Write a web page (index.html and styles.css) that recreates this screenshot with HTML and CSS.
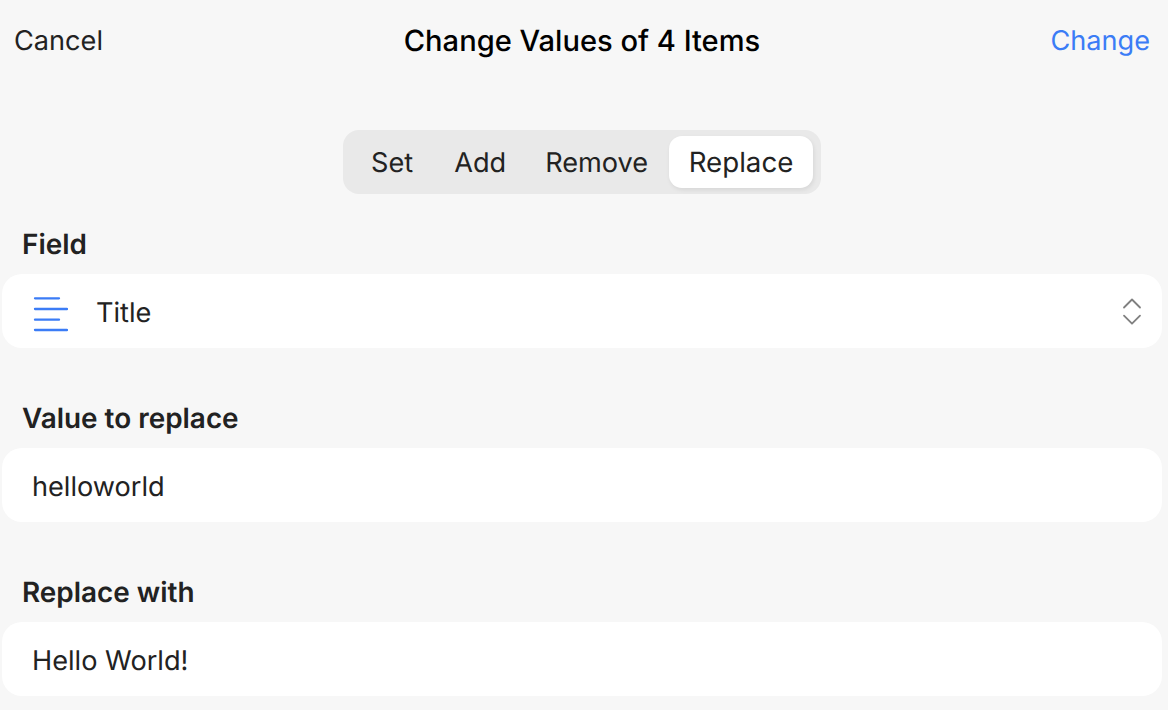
FILE: index.html
```html
<!DOCTYPE html>
<html lang="en">
<head>
<meta charset="utf-8">
<title>Change Values</title>
<link rel="stylesheet" href="styles.css">
</head>
<body>
<header class="topbar">
  <span class="cancel">Cancel</span>
  <span class="title">Change Values of 4 Items</span>
  <span class="confirm">Change</span>
</header>
<div class="segment-wrap">
  <div class="segment">
    <span class="seg seg-set">Set</span>
    <span class="seg seg-add">Add</span>
    <span class="seg seg-remove">Remove</span>
    <span class="seg seg-on">Replace</span>
  </div>
</div>
<section class="group group-field">
  <div class="label">Field</div>
  <div class="box box-select">
    <svg class="icon" width="36" height="44" viewBox="0 1 36 44" fill="none" stroke="#3b7cf6" stroke-width="2.300" stroke-linecap="round">
      <path d="M3 9.300H27M3 20H35M3 30.700H27M3 41H35"/>
    </svg>
    <span class="value">Title</span>
    <svg class="chevrons" width="20" height="30" viewBox="0 1 20 30" fill="none" stroke="#808080" stroke-width="1.800" stroke-linecap="round" stroke-linejoin="round">
      <path d="M2 11.500L10 3.500L18 11.500M2 19.700L10 27.700L18 19.700"/>
    </svg>
  </div>
</section>
<section class="group">
  <div class="label">Value to replace</div>
  <div class="box">helloworld</div>
</section>
<section class="group">
  <div class="label">Replace with</div>
  <div class="box">Hello World!</div>
</section>
</body>
</html>
```
FILE: styles.css
```css
html, body { margin: 0; padding: 0; }
body {
  width: 1168px;
  height: 710px;
  overflow: hidden;
  background: #f7f7f7;
  color: #222222;
  font-family: Inter, "Liberation Sans", sans-serif;
  font-size: 27.15px;
  text-rendering: geometricPrecision;
}
.topbar {
  height: 80px;
  padding: 0 18px 0 14px;
  display: grid;
  grid-template-columns: 1fr auto 1fr;
  align-items: center;
}
.title { color: #000; font-weight: 450; font-size: 29.1px; padding-top: 2px; }
.confirm { color: #3b7cf6; text-align: right; }
.segment-wrap {
  margin-top: 50px;
  padding-right: 4px;
  display: flex;
  justify-content: center;
}
.segment {
  height: 64px;
  box-sizing: border-box;
  padding: 6px 8px;
  display: flex;
  background: #e9e9e9;
  border-radius: 16px;
}
.seg {
  padding: 0 20.500px;
  display: flex;
  align-items: center;
}
.seg-set { padding-left: 20.500px; }
.seg-add { padding-right: 18.500px; }
.seg-on {
  padding: 0 20px;
  font-size: 27.7px;
  background: #fff;
  border-radius: 13px;
  box-shadow: 1px 2px 4px rgba(0,0,0,.08);
}
.group { margin-top: 53px; }
.group-field { margin-top: 33px; }
.label {
  padding-left: 22px;
  font-size: 27.9px;
  font-weight: 600;
  line-height: 34px;
  margin-bottom: 13px;
}
.box {
  margin: 0 6px 0 2px;
  height: 74px;
  box-sizing: border-box;
  background: #fff;
  border-radius: 20px;
  display: flex;
  align-items: center;
  padding: 2px 0 0 30px;
}
.box-select { padding-right: 20px; }
.icon { flex: none; margin-right: 28px; }
.value { flex: 1; }
.chevrons { flex: none; }
```
